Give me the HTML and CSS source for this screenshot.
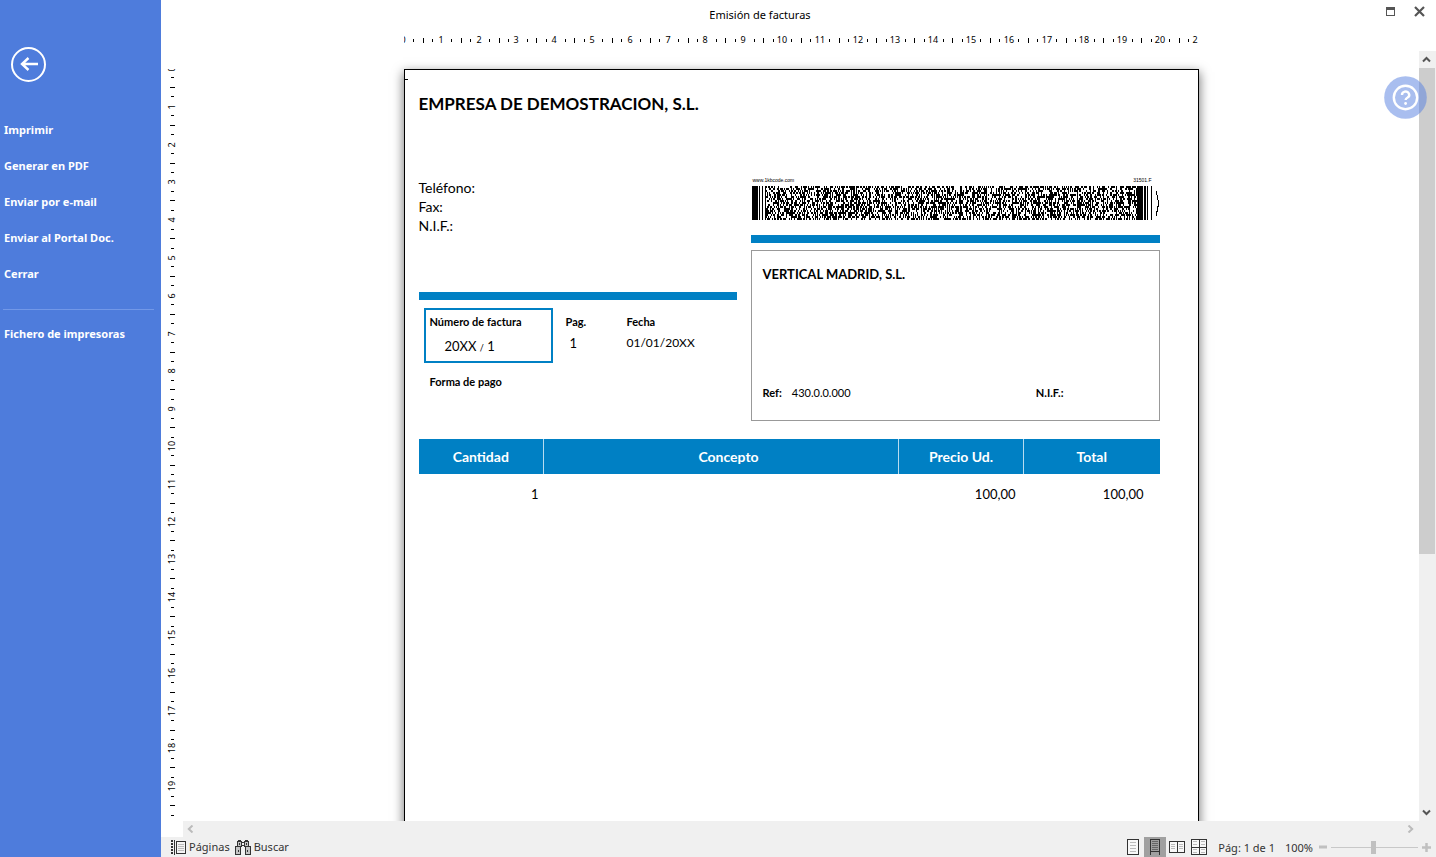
FILE: index.html
```html
<!DOCTYPE html>
<html lang="es">
<head>
<meta charset="utf-8">
<title>Emisión de facturas</title>
<link rel="stylesheet" href="styles.css">
</head>
<body>
<nav class="sidebar" aria-label="Acciones">
  <button class="back" aria-label="Volver">
    <svg width="36" height="36" viewBox="0 0 36 36"><circle cx="17.500" cy="17.500" r="16.500" fill="none" stroke="#fff" stroke-width="2"/><path d="M27 17H11M17.500 11l-6.500 6 6.500 6" fill="none" stroke="#fff" stroke-width="2.400"/></svg>
  </button>
  <button class="item">Imprimir</button>
  <button class="item">Generar en PDF</button>
  <button class="item">Enviar por e-mail</button>
  <button class="item">Enviar al Portal Doc.</button>
  <button class="item">Cerrar</button>
  <hr class="rule">
  <button class="item">Fichero de impresoras</button>
</nav>
<div class="main">
  <header class="titlebar">
    <h1 class="title">Emisión de facturas</h1>
    <div class="window-buttons">
      <button class="icon-button" aria-label="Maximizar"><svg width="9" height="9" viewBox="0 0 9 9" shape-rendering="crispEdges"><path d="M0 0h9v9H0zM1 3v5h7V3z" fill="#555" fill-rule="evenodd"/></svg></button>
      <button class="icon-button" aria-label="Cerrar ventana"><svg width="11" height="11" viewBox="0 0 11 11"><path d="M1 1l9 9M10 1l-9 9" stroke="#555" stroke-width="2.200"/></svg></button>
    </div>
  </header>
  <div class="h-ruler"><svg id="h-ruler" class="ruler-top" height="16"></svg></div>
  <div class="workspace">
    <svg id="v-ruler" class="ruler-left" width="22"></svg>
    <div class="canvas">
      <article class="sheet">
        <span class="margin-mark"></span>
        <h2 class="company">EMPRESA DE DEMOSTRACION, S.L.</h2>
        <div class="invoice-head">
          <div class="issuer">
            <p class="contact">Teléfono:<br>Fax:<br>N.I.F.:</p>
            <div class="bar"></div>
            <div class="facts">
              <div class="fact number"><span class="label">Número de factura</span><span class="value">20XX <small class="slash">/</small> 1</span></div>
              <div class="fact page"><span class="label">Pag.</span><span class="value">1</span></div>
              <div class="fact date"><span class="label">Fecha</span><span class="value">01/01/20XX</span></div>
            </div>
            <p class="label payment">Forma de pago</p>
          </div>
          <div class="receiver">
            <div class="barcode-notes"><span>www.1kbcode.com</span><span>31501.F</span></div>
            <svg id="barcode" class="barcode" viewBox="0 0 409 34" shape-rendering="crispEdges" role="img" aria-label="Código de barras"></svg>
            <div class="bar"></div>
            <div class="customer">
              <strong class="customer-name">VERTICAL MADRID, S.L.</strong>
              <div class="customer-ref"><b>Ref:</b><span>430.0.0.000</span><b class="nif">N.I.F.:</b></div>
            </div>
          </div>
        </div>
        <table class="lines">
          <colgroup><col class="c-qty"><col><col class="c-price"><col class="c-total"></colgroup>
          <thead><tr><th>Cantidad</th><th class="concept">Concepto</th><th>Precio Ud.</th><th>Total</th></tr></thead>
          <tbody><tr><td>1</td><td></td><td>100,00</td><td class="total">100,00</td></tr></tbody>
        </table>
      </article>
    </div>
    <div class="v-scroll">
      <button class="scroll-arrow" aria-label="Subir"><svg width="9" height="7" viewBox="0 0 9 7"><path d="M1 5.500l3.500-3.500L8 5.500" fill="none" stroke="#555" stroke-width="2"/></svg></button>
      <div class="track"><div class="thumb"></div></div>
      <button class="scroll-arrow" aria-label="Bajar"><svg width="9" height="7" viewBox="0 0 9 7"><path d="M1 1.500L4.500 5 8 1.500" fill="none" stroke="#555" stroke-width="2"/></svg></button>
    </div>
    <button class="help" aria-label="Ayuda">
      <svg width="43" height="43" viewBox="0 0 43 43"><circle cx="21.500" cy="21.500" r="21.300" fill="#5c84e0" fill-opacity=".53"/><circle cx="21.500" cy="21.500" r="11.700" fill="none" stroke="#fff" stroke-width="2.400"/><path d="M18 19a3.600 3.300 0 1 1 5.600 2.500c-1.400.8-2 1.200-2 2.600" fill="none" stroke="#fff" stroke-width="2.400"/><circle cx="21.600" cy="27.500" r="1.400" fill="#fff"/></svg>
    </button>
  </div>
  <div class="h-scroll">
    <button class="scroll-arrow" aria-label="Izquierda"><svg width="7" height="8" viewBox="0 0 7 8"><path d="M5.500.5L1.800 4l3.700 3.500" fill="none" stroke="#bbb" stroke-width="2"/></svg></button>
    <button class="scroll-arrow" aria-label="Derecha"><svg width="7" height="8" viewBox="0 0 7 8"><path d="M1.500.5L5.200 4 1.500 7.500" fill="none" stroke="#bbb" stroke-width="2"/></svg></button>
  </div>
  <footer class="status">
    <button class="tool">
      <svg width="15" height="16" viewBox="0 0 15 16" shape-rendering="crispEdges"><path d="M1 1v15" stroke="#333" stroke-width="2" stroke-dasharray="2 1"/><path d="M3.500 1v15" stroke="#333"/><path d="M5.500 2.500h9v12h-9z" fill="#f4f4f4" stroke="#333"/><path d="M7 5h6M7 7h6M7 9h6M7 11h6" stroke="#bbb"/></svg>
      Páginas</button>
    <button class="tool">
      <svg width="16" height="16" viewBox="0 0 16 16" shape-rendering="crispEdges"><g fill="#c4c4c4" stroke="#333"><path d="M2.500 2.500h4v5h-4zM9.500 2.500h4v5h-4z"/><path d="M.5 7.500h5v8h-5zM10.500 7.500h5v8h-5z"/></g><path d="M3 1.500h3M10 1.500h3M7 3.500h2M7 6.500h2M4.500 4v2M11.500 4v2M3.500 11v2M12.500 11v2" stroke="#333"/></svg>
      Buscar</button>
    <div class="views">
      <button class="view" aria-label="Página completa"><svg width="12" height="16" viewBox="0 0 12 16" shape-rendering="crispEdges"><path d="M.5.500h11v15H.5z" fill="#f8f8f8" stroke="#333"/><path d="M3 3.500h6M3 6.500h6M3 9.500h6M3 12.500h6" stroke="#bbb"/></svg></button>
      <button class="view active" aria-label="Continua"><svg width="10" height="16" viewBox="0 0 10 16" shape-rendering="crispEdges"><path d="M.5 16V.5h9V16M.5 12.500h9" fill="none" stroke="#333"/><path d="M2 2.500h6M2 4.500h6M2 6.500h6M2 8.500h6M2 10.500h6" stroke="#666"/></svg></button>
      <button class="view" aria-label="Dos páginas"><svg width="16" height="12" viewBox="0 0 16 12" shape-rendering="crispEdges"><path d="M.5.500h15v11H.5zM8.500 0v12" fill="#f8f8f8" stroke="#333"/><path d="M2 3.500h4M2 5.500h4M2 7.500h4M10 3.500h4M10 5.500h4M10 7.500h4" stroke="#bbb"/></svg></button>
      <button class="view" aria-label="Cuatro páginas"><svg width="16" height="16" viewBox="0 0 16 16" shape-rendering="crispEdges"><path d="M.5.500h15v15H.5zM8.500 0v16M0 8.500h16" fill="#f8f8f8" stroke="#333"/><path d="M2 2.500h4M2 5.500h4M10 2.500h4M10 5.500h4M2 10.500h4M2 13.500h4M10 10.500h4M10 13.500h4" stroke="#bbb"/></svg></button>
    </div>
    <span class="page-info">Pág: 1 de 1</span>
    <label class="zoom-value" for="zoom">100%</label>
    <button class="step" aria-label="Reducir"><svg width="8" height="8" viewBox="0 0 8 8"><path d="M0 4h8" stroke="#c0c0c0" stroke-width="3"/></svg></button>
    <input id="zoom" class="zoom" type="range" min="0" max="200" value="98">
    <button class="step" aria-label="Ampliar"><svg width="9" height="9" viewBox="0 0 9 9"><path d="M0 4.500h9M4.500 0v9" stroke="#c0c0c0" stroke-width="2.500"/></svg></button>
  </footer>
</div>
<script src="script.js"></script>
</body>
</html>
```
FILE: styles.css
```css
* { box-sizing: border-box; }

body {
  margin: 0;
  display: flex;
  height: 100vh;
  overflow: hidden;
  background: #fff;
  color: #000;
  font-family: "Noto Sans", "Open Sans", sans-serif;
  font-size: 11px;
}

h1, h2, p { margin: 0; font-weight: normal; }

button {
  margin: 0;
  padding: 0;
  border: 0;
  background: none;
  color: inherit;
  font: inherit;
}

svg { display: block; flex: none; }

.sidebar {
  flex: none;
  width: 161px;
  padding-top: 47px;
  display: flex;
  flex-direction: column;
  background: #4e7cdc;
  color: #fff;
}

.back { align-self: flex-start; margin: 0 0 28px 11px; }

.item {
  height: 36px;
  padding-left: 4px;
  text-align: left;
  font-size: 11px;
  font-weight: bold;
}

.rule {
  width: 151px;
  margin: 18px 0 5px 3px;
  border: 0;
  border-top: 1px solid #7298e8;
}

.main { flex: 1; min-width: 0; display: flex; flex-direction: column; }

.titlebar { display: flex; height: 30px; }
.title { flex: 1; font-size: 11px; line-height: 30px; text-align: center; }
.window-buttons {
  width: 77px;
  display: flex;
  justify-content: flex-end;
  align-items: center;
  gap: 19px;
  padding: 0 11px 7px 0;
}

.h-ruler { height: 21px; padding: 2px 17px 0 22px; }
.ruler-top { width: 795px; margin: 0 auto; }
.ruler-top text, .ruler-left text {
  font-family: "Noto Sans", sans-serif;
  font-size: 9px;
  text-anchor: middle;
}

.workspace { position: relative; flex: 1; min-height: 0; display: flex; }
.ruler-left { height: 100%; padding-top: 18px; }

.canvas { flex: 1; min-width: 0; overflow: hidden; padding-top: 18px; }

.sheet {
  width: 795px;
  min-height: 1123px;
  margin: 0 auto;
  padding: 23px 38px 0 14px;
  border: 1px solid #000;
  background: #fff;
  box-shadow: 0 4px 10px 1px rgba(0, 0, 0, .5);
  font-family: Lato, sans-serif;
  font-size: 13px;
  position: relative;
}
.margin-mark { position: absolute; top: 9px; left: 0; width: 3px; height: 1px; background: #000; }

.company { font-size: 17px; line-height: 22px; font-weight: bold; }

.invoice-head { display: grid; grid-template-columns: 318fr 409fr; gap: 14px; padding-top: 61px; }

.bar { height: 8px; background: #0080c4; }

.contact { padding-top: 2px; height: 116px; font-size: 14px; line-height: 19px; }

.facts { display: flex; align-items: flex-start; padding: 8px 0 0 5px; }
.fact { display: flex; flex-direction: column; gap: 5px; padding-top: 6px; }
.label { font-size: 11px; line-height: 16px; font-weight: bold; }
.value { line-height: 16px; }
.date .value { font-size: 12px; }
.number {
  width: 129px;
  height: 55px;
  padding: 4px;
  gap: 8px;
  border: 2px solid #0080c4;
}
.number .value { padding-left: 15px; }
.slash { font-size: 9px; }
.page { width: 61px; margin-left: 13px; }
.page .value { padding-left: 4px; }
.payment { padding: 11px 0 0 11px; }

.barcode-notes {
  display: flex;
  justify-content: space-between;
  padding: 0 8px 0 2px;
  height: 10px;
  font: 5px/8px "Liberation Sans", sans-serif;
}
.barcode { width: 100%; margin-bottom: 15px; }

.customer {
  display: flex;
  flex-direction: column;
  justify-content: space-between;
  height: 171px;
  margin-top: 7px;
  padding: 14px 95px 19px 11px;
  border: 1px solid #999;
}
.customer-name { line-height: 18px; }
.customer-ref { display: flex; gap: 10px; font-size: 11px; line-height: 16px; }
.nif { margin-left: auto; }

.lines { width: 100%; margin-top: 18px; border-collapse: collapse; table-layout: fixed; }
.c-qty { width: 125px; }
.c-price { width: 125px; }
.c-total { width: 136px; }
.lines th {
  height: 35px;
  padding: 0;
  background: #0080c4;
  color: #fff;
  font-size: 14px;
  line-height: 16px;
  border-left: 1px solid #b8dcf0;
}
.lines th:first-child { border-left: 0; }
.lines .concept { padding-left: 15px; }
.lines td { height: 40px; padding: 0 8px 0 0; text-align: right; }
.lines td:first-child { padding-right: 5px; }
.lines .total { padding-right: 16px; }

.v-scroll { flex: none; width: 17px; display: flex; flex-direction: column; background: #f0f0f0; }
.scroll-arrow { flex: none; width: 15px; height: 17px; display: grid; place-items: center; }
.track { flex: 1; padding-right: 1px; }
.thumb { height: 66%; background: #cdcdcd; }

.help { position: absolute; top: 25px; right: 9px; }

.h-scroll {
  display: flex;
  justify-content: space-between;
  align-items: center;
  height: 16px;
  margin-left: 22px;
  padding-right: 18px;
  background: #f0f0f0;
}

.status {
  display: flex;
  align-items: center;
  height: 20px;
  padding: 0 5px 0 10px;
  background: #f0f0f0;
  color: #333;
}
.tool { display: flex; align-items: center; gap: 3px; margin-right: 5px; line-height: 20px; }
.views { display: flex; height: 20px; margin-left: auto; }
.view { width: 22px; display: grid; place-items: center; }
.active { background: #a0a0a0; }
.page-info { margin-left: 8px; }
.zoom-value { margin: 0 6px 0 10px; }
.step { flex: none; display: flex; }
.zoom {
  appearance: none;
  width: 87px;
  height: 13px;
  margin: 0 4px;
  background: linear-gradient(#c8c8c8, #c8c8c8) center / 100% 1px no-repeat;
}
.zoom::-webkit-slider-thumb { appearance: none; width: 5px; height: 13px; background: #c0c0c0; }
```
FILE: script.js
```js
const NS = "http://www.w3.org/2000/svg";
const CM = 37.8;

function add(parent, tag, attrs, text) {
  const node = document.createElementNS(NS, tag);
  for (const key in attrs) node.setAttribute(key, attrs[key]);
  if (text !== undefined) node.textContent = text;
  parent.appendChild(node);
}

// Horizontal ruler: number per centimetre, long tick on the half
const topRuler = document.getElementById("h-ruler");
for (let q = 0; q < 84; q++) {
  const x = Math.round(q * CM / 4);
  if (q % 4 === 0) add(topRuler, "text", { x: q < 40 ? x - 1 : x, y: 11 }, q / 4);
  else add(topRuler, "rect", { x: x, y: q % 4 === 2 ? 6 : 7, width: 1, height: q % 4 === 2 ? 5 : 3 });
}
add(topRuler, "text", { x: 791, y: 11 }, "2");

// Vertical ruler, numbers turned to read upwards
const left = document.getElementById("v-ruler");
for (let q = 0; q <= 79; q++) {
  const y = Math.round(q * CM / 4);
  if (q % 4 === 0) add(left, "text", { transform: "translate(14 " + (q < 40 ? y : y - 1) + ") rotate(-90)" }, q / 4);
  else add(left, "rect", { x: q % 4 === 2 ? 9 : 10, y: y - 1, width: q % 4 === 2 ? 5 : 3, height: 1 });
}

// Stacked barcode: guard bars at both ends, cells in between
const code = document.getElementById("barcode");
let d = "M1 0h6v34h-6zM8 0h1v34h-1zM11 0h1v34h-1zM14 0h1v34h-1zM386 0h6v34h-6zM393 0h2v34h-2zM396 0h1v34h-1zM400 0h1v34h-1z";
let seed = 31501;
const random = () => (seed = (seed * 16807) % 2147483647) / 2147483647;
for (let x = 15; x < 386; x++) {
  if ((x - 14) % 13 === 0) { d += "M" + x + " 0h1v34h-1z"; continue; }
  for (let y = 0; y < 34; y += 2) if (random() < .5) d += "M" + x + " " + y + "h1v2h-1z";
}
add(code, "path", { d: d });
add(code, "path", { d: "M405 5h1v4h1v5h1v7h-1v5h-1v4h-1v-5h1v-5h1v-6h-1v-5h-1z" });
```
